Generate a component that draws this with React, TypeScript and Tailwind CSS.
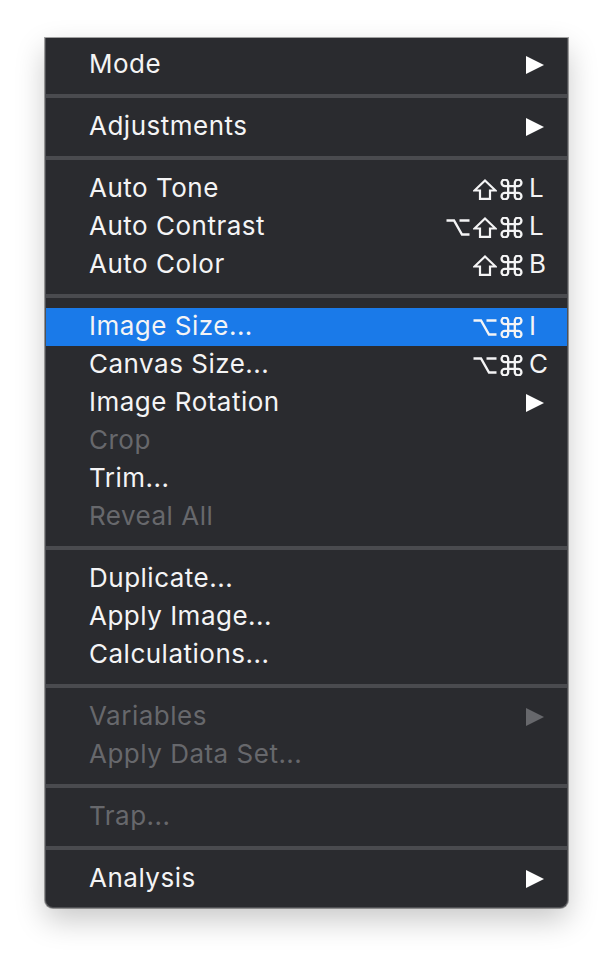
import React from "react";

type Key = "opt" | "shift" | "cmd";

type Item = {
  label: string;
  keys?: Key[];
  letter?: string;
  sub?: boolean;
  disabled?: boolean;
  active?: boolean;
};

const sections: Item[][] = [
  [{ label: "Mode", sub: true }],
  [{ label: "Adjustments", sub: true }],
  [
    { label: "Auto Tone", keys: ["shift", "cmd"], letter: "L" },
    { label: "Auto Contrast", keys: ["opt", "shift", "cmd"], letter: "L" },
    { label: "Auto Color", keys: ["shift", "cmd"], letter: "B" },
  ],
  [
    { label: "Image Size...", keys: ["opt", "cmd"], letter: "I", active: true },
    { label: "Canvas Size...", keys: ["opt", "cmd"], letter: "C" },
    { label: "Image Rotation", sub: true },
    { label: "Crop", disabled: true },
    { label: "Trim..." },
    { label: "Reveal All", disabled: true },
  ],
  [
    { label: "Duplicate..." },
    { label: "Apply Image..." },
    { label: "Calculations..." },
  ],
  [
    { label: "Variables", sub: true, disabled: true },
    { label: "Apply Data Set...", disabled: true },
  ],
  [{ label: "Trap...", disabled: true }],
  [{ label: "Analysis", sub: true }],
];

function Arrow({ color }: { color: string }) {
  return (
    <svg width="18" height="18" viewBox="0 0 18 18" className="mr-[3px]">
      <polygon points="0,0 18,9 0,18" fill={color} />
    </svg>
  );
}

// modifier key symbols
function KeyIcon({ k }: { k: Key }) {
  if (k === "cmd") {
    return (
      <svg width="23" height="21" viewBox="2.5 2.5 19 19" fill="none" stroke="currentColor" strokeWidth="2.1">
        <path d="M15 6v12a3 3 0 1 0 3-3H6a3 3 0 1 0 3 3V6a3 3 0 1 0-3 3h12a3 3 0 1 0-3-3" />
      </svg>
    );
  }
  if (k === "shift") {
    return (
      <svg width="24" height="21" viewBox="0 0 24 21" fill="none" stroke="currentColor" strokeWidth="2.2">
        <path d="M12 1.5 L22.5 11.5 H17 V19.8 H7 V11.5 H1.5 Z" />
      </svg>
    );
  }
  return (
    <svg width="24" height="19" viewBox="0 0 24 19" fill="none" stroke="currentColor" strokeWidth="2.4">
      <path d="M0.5 2.5 H8 L16 16.5 H23.5 M13.5 2.5 H23.5" />
    </svg>
  );
}

function Row({ item }: { item: Item }) {
  const text = item.disabled ? "text-[#67686c]" : "text-[#f4f4f5]";
  return (
    <div
      className={`flex h-[38px] items-center justify-between pl-[43px] pr-[20px] ${
        item.active ? "bg-[#1a7ae9]" : ""
      } ${text}`}
    >
      <span className="-mt-[2px] text-[26px] leading-[38px] tracking-[0.5px] font-['Inter',sans-serif]">
        {item.label}
      </span>
      {item.sub && <Arrow color={item.disabled ? "#67686c" : "#ffffff"} />}
      {item.keys && (
        <span className="flex items-center">
          {item.keys.map((k, i) => (
            <span key={i} className="flex w-[27px] justify-center">
              <KeyIcon k={k} />
            </span>
          ))}
          <span className="-mt-[2px] w-[22px] pl-[4px] text-[26px] leading-[38px] font-['Inter',sans-serif]">
            {item.letter}
          </span>
        </span>
      )}
    </div>
  );
}

export default function App() {
  return (
    <div className="min-h-[960px] w-[614px] bg-white pt-[38px]">
      <div className="ml-[45px] w-[523px] rounded-b-[8px] border-x border-b border-[#505155] bg-[#2a2b2f] pt-[8px] pb-[9px] shadow-[0_0_0_1px_rgba(0,0,0,0.35),0_12px_30px_rgba(0,0,0,0.22)]">
        {sections.map((sec, si) => (
          <div key={si}>
            {si > 0 && <div className="my-[10px] h-[4px] bg-[#4a4b4f]" />}
            {sec.map((item) => (
              <Row key={item.label} item={item} />
            ))}
          </div>
        ))}
      </div>
    </div>
  );
}
